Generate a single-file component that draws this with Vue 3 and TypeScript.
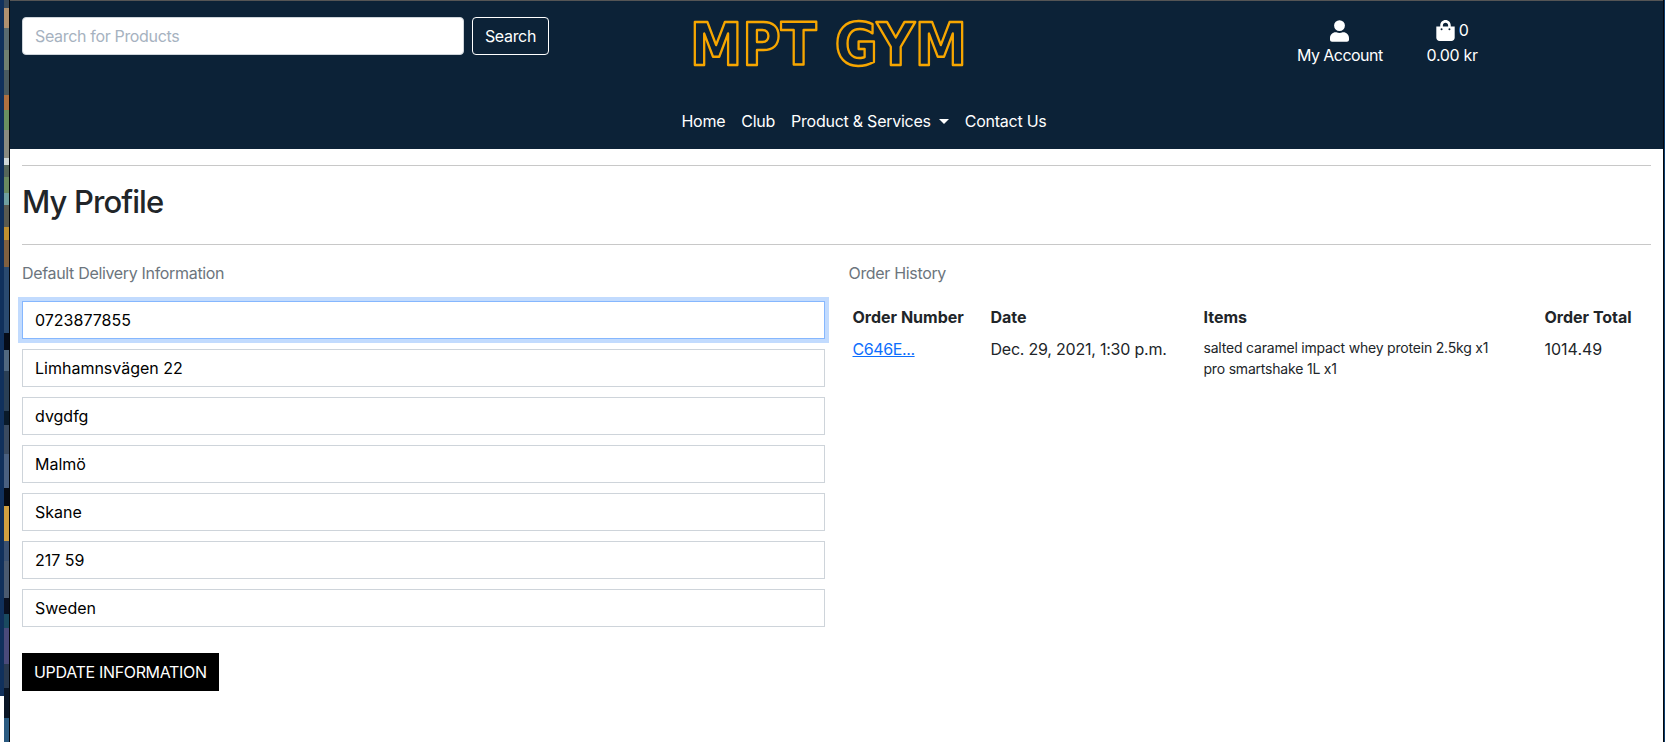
<template>
  <div class="screen">
    <div class="desk-left"><span class="desk-corner"></span></div>
    <div class="page">
      <header class="site-header">
        <div class="top-row">
          <form class="search-form" @submit.prevent>
            <input class="search-input" type="text" placeholder="Search for Products" />
            <button class="search-btn" type="submit">Search</button>
          </form>
          <div class="logo">
            <svg class="logo-svg" width="290" height="60" viewBox="0 0 290 60" role="img" aria-label="MPT GYM">
              <text class="logo-text" x="-1" y="48" textLength="277" lengthAdjust="spacingAndGlyphs">MPT GYM</text>
            </svg>
          </div>
          <div class="account-links">
            <a class="account-link" href="#" @click.prevent>
              <svg class="ico" width="19" height="22" viewBox="0 0 448 512">
                <path fill="#fff" d="M224 256a128 128 0 1 0 0-256 128 128 0 0 0 0 256zm90 32h-17a174 174 0 0 1-146 0h-17C60 288 0 348 0 422v42c0 26 22 48 48 48h352c26 0 48-22 48-48v-42c0-74-60-134-134-134z" />
              </svg>
              <span class="account-text">My Account</span>
            </a>
            <a class="cart-link" href="#" @click.prevent>
              <span class="cart-top">
                <svg class="ico" width="19" height="21" viewBox="0 0 448 512">
                  <path fill="#fff" d="M352 160v-32C352 57 295 0 224 0S96 57 96 128v32H0v272c0 44 36 80 80 80h288c44 0 80-36 80-80V160h-96zm-192-32c0-35 29-64 64-64s64 29 64 64v32H160v-32zm160 120a24 24 0 1 1 0-48 24 24 0 0 1 0 48zm-192 0a24 24 0 1 1 0-48 24 24 0 0 1 0 48z" />
                </svg>
                <span>{{ cartCount }}</span>
              </span>
              <span>{{ cartTotal }} kr</span>
            </a>
          </div>
        </div>
        <nav class="main-nav">
          <a v-for="link in navLinks" :key="link.label" href="#" class="nav-link" @click.prevent>
            {{ link.label }}<i v-if="link.dropdown" class="caret"></i>
          </a>
        </nav>
      </header>

      <main class="content">
        <hr class="rule" />
        <h1 class="page-title">My Profile</h1>
        <hr class="rule rule-title" />
        <div class="columns">
          <section class="col">
            <p class="section-label">Default Delivery Information</p>
            <form class="profile-form" @submit.prevent>
              <input
                v-for="(field, i) in fields"
                :key="i"
                class="field"
                :class="{ focused: i === 0 }"
                type="text"
                :value="field"
              />
              <button class="update-btn" type="submit">UPDATE INFORMATION</button>
            </form>
          </section>
          <section class="col">
            <p class="section-label">Order History</p>
            <table class="orders">
              <colgroup>
                <col class="c-num" />
                <col class="c-date" />
                <col class="c-items" />
                <col />
              </colgroup>
              <thead>
                <tr>
                  <th>Order Number</th>
                  <th>Date</th>
                  <th>Items</th>
                  <th>Order Total</th>
                </tr>
              </thead>
              <tbody>
                <tr v-for="order in orders" :key="order.id">
                  <td><a href="#" class="order-link" @click.prevent>{{ order.id }}</a></td>
                  <td class="date">{{ order.date }}</td>
                  <td class="items">
                    <div v-for="item in order.items" :key="item">{{ item }}</div>
                  </td>
                  <td>{{ order.total }}</td>
                </tr>
              </tbody>
            </table>
          </section>
        </div>
      </main>
    </div>
    <div class="desk-right"></div>
  </div>
</template>

<script setup lang="ts">
const cartCount = 0
const cartTotal = '0.00'

const navLinks = [
  { label: 'Home' },
  { label: 'Club' },
  { label: 'Product & Services', dropdown: true },
  { label: 'Contact Us' },
]

const fields = [
  '0723877855',
  'Limhamnsvägen 22',
  'dvgdfg',
  'Malmö',
  'Skane',
  '217 59',
  'Sweden',
]

const orders = [
  {
    id: 'C646E...',
    date: 'Dec. 29, 2021, 1:30 p.m.',
    items: ['salted caramel impact whey protein 2.5kg x1', 'pro smartshake 1L x1'],
    total: '1014.49',
  },
]
</script>

<style>
html,
body {
  margin: 0;
  background: #fff;
  overflow: hidden;
}
</style>

<style scoped>
.screen {
  display: flex;
  height: 742px;
  font-family: Inter, "Liberation Sans", sans-serif;
  font-size: 16px;
  line-height: 24px;
  letter-spacing: -0.33px;
  color: #212529;
  overflow: hidden;
}

/* sliver of the desktop wallpaper behind the browser window */
.desk-left {
  width: 9px;
  flex: none;
  border-right: 1px solid #05080d;
  position: relative;
  background:
    linear-gradient(90deg, #10305c 0 4px, transparent 4px),
    linear-gradient(
      180deg,
      #3a4a5a 0 8px,
      #b09070 8px 28px,
      #5a6a70 28px 50px,
      #708070 50px 70px,
      #4a5a60 70px 95px,
      #b07040 95px 110px,
      #6a9060 110px 130px,
      #8a8a80 130px 158px,
      #d0d8d8 158px 165px,
      #55665a 165px 177px,
      #6a8a60 177px 193px,
      #70a0a0 193px 205px,
      #5a5a50 205px 227px,
      #c09030 227px 240px,
      #806040 240px 267px,
      #2a4a70 267px 333px,
      #060c18 333px 350px,
      #506880 350px 371px,
      #2a3f55 371px 411px,
      #0a1a2a 411px 425px,
      #3a4a60 425px 454px,
      #4a6080 454px 488px,
      #060a12 488px 506px,
      #d0a040 506px 541px,
      #3a5070 541px 561px,
      #4a5a70 561px 598px,
      #0a1020 598px 614px,
      #1a4a60 614px 628px,
      #4a4a7a 628px 664px,
      #2a3a50 664px 688px,
      #0a1525 688px 718px,
      #2a5a80 718px 742px
    );
}

.desk-corner {
  position: absolute;
  left: 0;
  bottom: 0;
  width: 4px;
  height: 46px;
  background: #fff;
}

.desk-right {
  width: 1px;
  flex: none;
  border-left: 1px solid #05080d;
  background: #0a3a6a;
}

.page {
  flex: 1;
  min-width: 0;
  background: #fff;
}

.site-header {
  height: 149px;
  box-sizing: border-box;
  background: #0c2237;
  border-top: 1px solid #555;
  color: #fff;
}

.top-row {
  display: grid;
  grid-template-columns: 1fr 1fr 1fr;
  height: 100px;
  padding-top: 16px;
  box-sizing: border-box;
}

.search-form {
  display: flex;
  align-items: flex-start;
  gap: 8px;
  padding-left: 12px;
}

.search-input {
  width: 442px;
  height: 38px;
  flex: none;
  box-sizing: border-box;
  padding: 6px 12px;
  border: 1px solid #ced4da;
  border-radius: 4px;
  font: inherit;
  letter-spacing: inherit;
  color: #212529;
  background: #fff;
}

.search-input::placeholder {
  color: #a6b2c0;
}

.search-btn {
  width: 77px;
  height: 38px;
  flex: none;
  padding: 0;
  border: 1px solid #fff;
  border-radius: 4px;
  background: transparent;
  color: #fff;
  font: inherit;
  letter-spacing: inherit;
}

.logo {
  padding-left: 130px;
}

.logo-svg {
  display: block;
  overflow: visible;
}

.logo-text {
  font-family: "DejaVu Sans", sans-serif;
  font-weight: 700;
  font-size: 58px;
  letter-spacing: 0;
  fill: none;
  stroke: #f7a600;
  stroke-width: 2.5;
  stroke-linejoin: round;
}

.account-links {
  display: flex;
  align-items: flex-start;
  padding-left: 185px;
  gap: 44px;
}

.account-link,
.cart-link {
  display: flex;
  flex-direction: column;
  align-items: center;
  color: #fff;
  text-decoration: none;
}

.account-link .ico {
  margin: 3px 0 1px;
}

.account-text {
  letter-spacing: -0.55px;
}

.cart-top {
  display: flex;
  align-items: center;
  gap: 4px;
  height: 26px;
}

.main-nav {
  display: flex;
  justify-content: center;
  padding-left: 55px;
  letter-spacing: -0.25px;
}

.nav-link {
  padding: 8px;
  color: #fff;
  text-decoration: none;
  white-space: nowrap;
}

.caret {
  display: inline-block;
  margin-left: 8px;
  vertical-align: 3px;
  border-top: 5px solid #fff;
  border-left: 5px solid transparent;
  border-right: 5px solid transparent;
}

.content {
  padding: 0 12px;
}

.rule {
  margin: 16px 0 0;
  border: 0;
  border-top: 1px solid #c8c8c8;
}

.page-title {
  margin: 16px 0 0;
  font-size: 31px;
  line-height: 40px;
  font-weight: 500;
  letter-spacing: -0.9px;
}

.rule-title {
  margin-top: 22px;
}

.columns {
  display: grid;
  grid-template-columns: 1fr 1fr;
  column-gap: 24px;
  margin-top: 16px;
}

.section-label {
  margin: 0;
  color: #6c757d;
}

.profile-form {
  display: flex;
  flex-direction: column;
  align-items: flex-start;
  gap: 10px;
  margin-top: 16px;
}

.field {
  width: 100%;
  height: 38px;
  box-sizing: border-box;
  padding: 6px 12px;
  border: 1px solid #ced4da;
  border-radius: 0;
  font: inherit;
  letter-spacing: 0;
  color: #000;
  background: #fff;
  outline: none;
}

.field.focused {
  border-color: #86b7fe;
  box-shadow: 0 0 0 4px #c2dbfe;
}

.update-btn {
  height: 38px;
  margin-top: 16px;
  padding: 0 12px;
  border: 0;
  background: #000;
  color: #fff;
  font: inherit;
  letter-spacing: inherit;
}

.orders {
  width: 100%;
  table-layout: fixed;
  border-collapse: collapse;
  margin-top: 16px;
  letter-spacing: 0;
}

.c-num {
  width: 138px;
}

.c-date {
  width: 213px;
}

.c-items {
  width: 341px;
}

.orders th,
.orders td {
  padding: 4px;
  text-align: left;
  vertical-align: top;
}

.orders th {
  font-weight: 700;
}

.order-link {
  color: #0d6efd;
  letter-spacing: -0.4px;
}

.date {
  letter-spacing: -0.22px;
}

.items {
  font-size: 14px;
  line-height: 21px;
  letter-spacing: -0.2px;
}
</style>
